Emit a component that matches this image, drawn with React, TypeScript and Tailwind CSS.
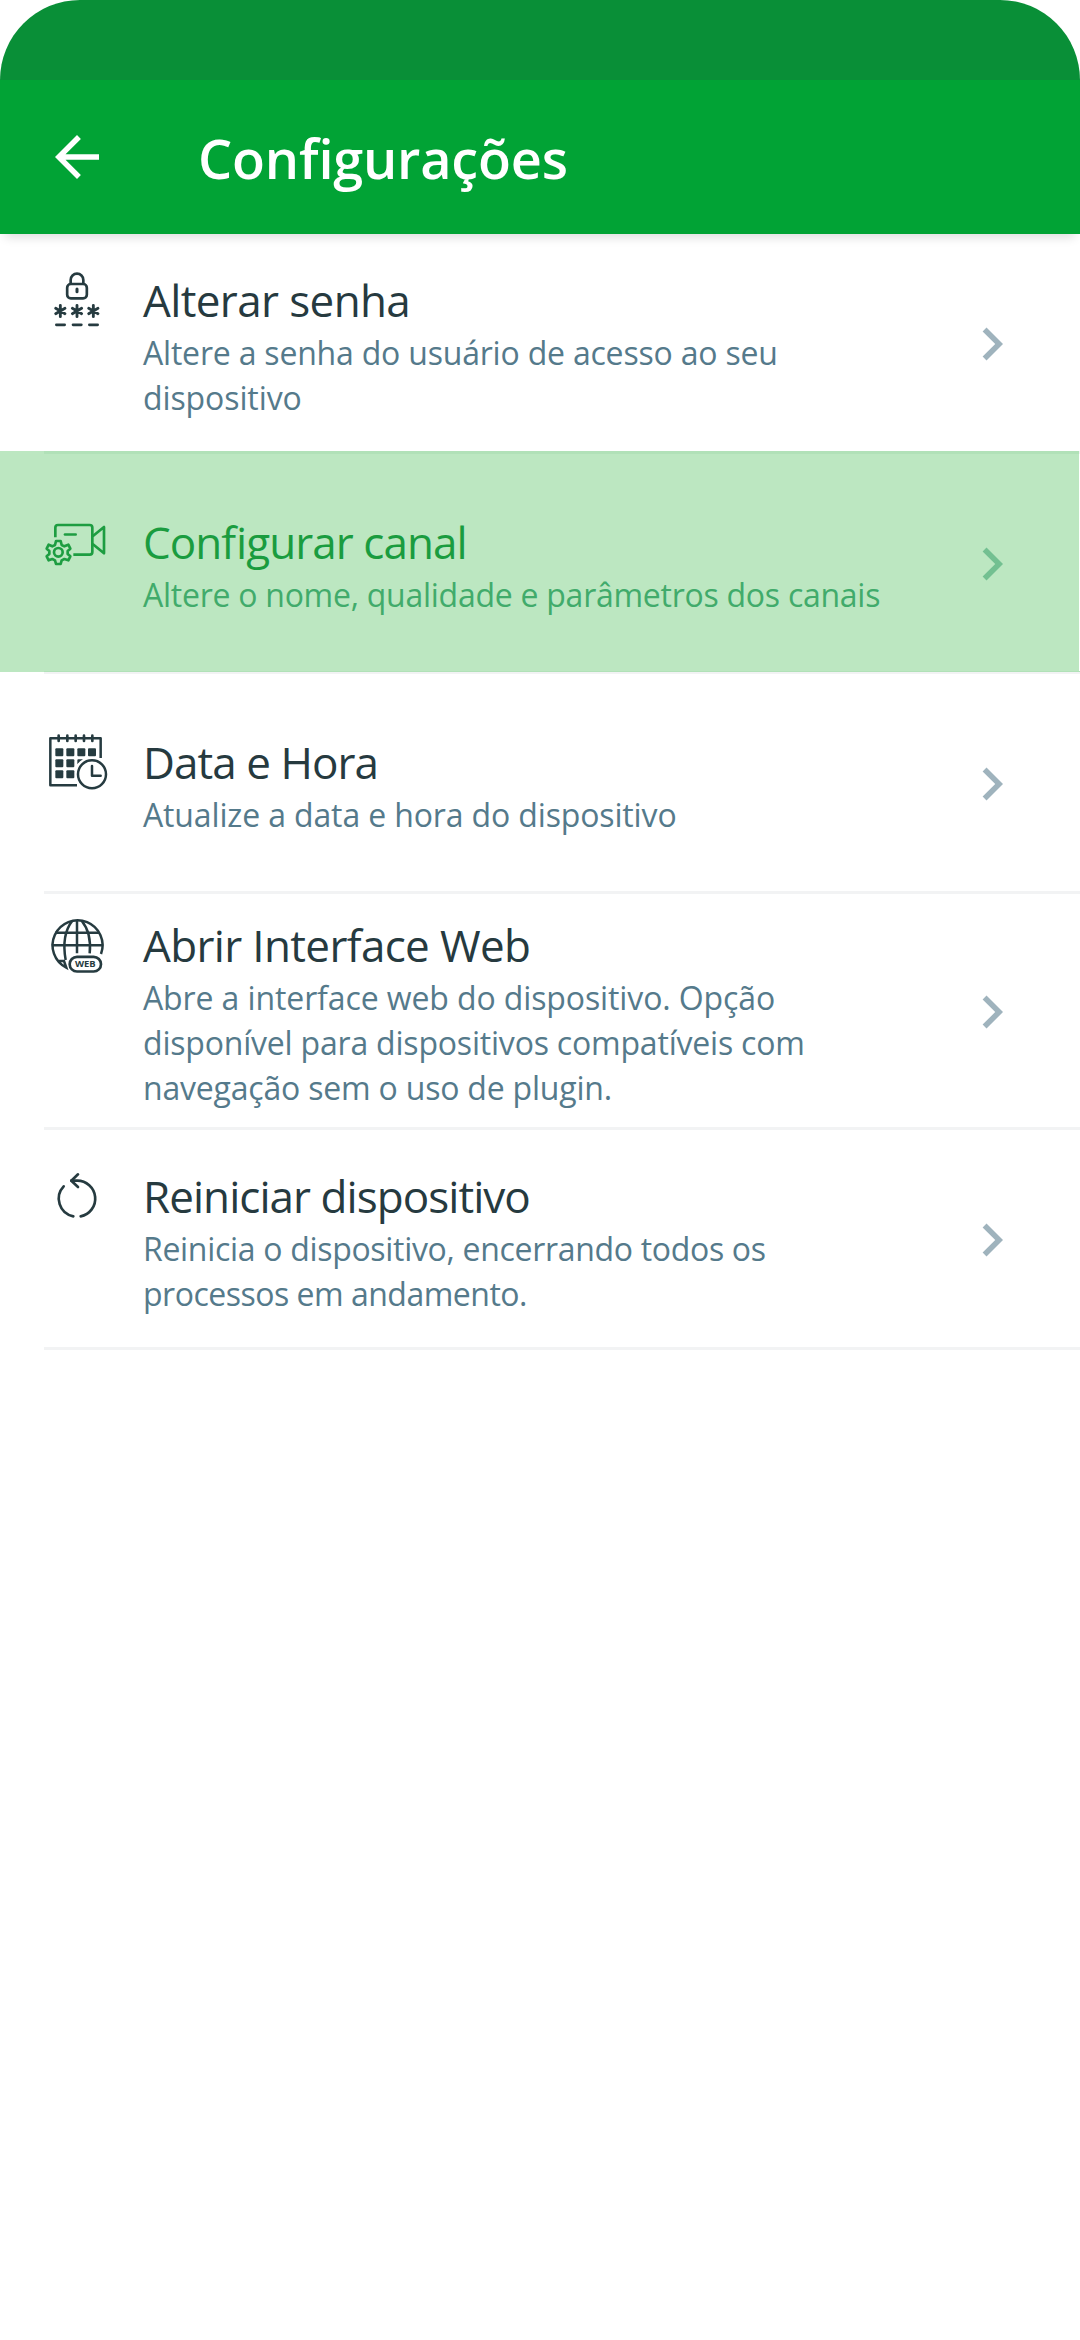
import { type ReactNode } from "react";

type Line = { text: string; tracking: string };

function LockIcon() {
  return (
    <svg className="h-[90px] w-[100px]" viewBox="0 0 300 270" fill="none" stroke="currentColor" strokeWidth="8" strokeLinecap="round">
      <path d="M122 86V75a19 19 0 0 1 38 0V86" />
      <rect x="111.500" y="87" width="59" height="43" rx="11" />
      <path d="M141 102v8" strokeWidth="9" />
      {[91, 141, 190].map((x) => (
        <g key={x}>
          <path d={`M${x} 151v34M${x - 14} 160l28 16M${x + 14} 160l-28 16`} strokeWidth="8.500" />
          <path d={`M${x - 12} 209.500h25`} />
        </g>
      ))}
    </svg>
  );
}

function CameraIcon() {
  return (
    <svg className="h-[80px] w-[100px]" viewBox="0 0 300 240" fill="none" stroke="currentColor" strokeWidth="8" strokeLinejoin="round">
      <path d="M76 97V68q0-8 8-8h95q8 0 8 8v73q0 8-8 8h-49" />
      <path d="M188 94l34-28v79l-34-28" />
      <path d="M105 88.500h32" strokeLinecap="round" />
      <circle cx="85" cy="142" r="13" />
      <path d="M78 108h14l3 12 8 4 12-5 6 12-8 7v9l8 7-6 12-12-4-8 4-3 11H78l-3-11-8-4-11 4-6-12 8-7v-9l-8-7 6-12 11 5 8-4z" />
    </svg>
  );
}

function CalendarIcon() {
  return (
    <svg className="h-[80px] w-[100px]" viewBox="0 0 300 240" fill="none" stroke="currentColor" strokeWidth="7.500">
      <path d="M212 114V55H61v141h80" strokeLinejoin="round" />
      {[86, 112, 137, 162, 187].map((x) => (
        <path key={x} d={`M${x} 47v16`} strokeLinecap="round" strokeWidth="8" />
      ))}
      <g fill="currentColor" stroke="none">
        {[76, 109, 142, 174].map((x) => (
          <rect key={x} x={x} y="85" width="24" height="24" rx="3" />
        ))}
        <rect x="76" y="118" width="24" height="24" rx="3" />
        <rect x="109" y="118" width="24" height="24" rx="3" />
        <rect x="76" y="151" width="24" height="24" rx="3" />
        <rect x="109" y="151" width="24" height="24" rx="3" />
        <path d="M142 133v-12q0-3 3-3h14q-10 5-17 15z" />
      </g>
      <circle cx="186" cy="163" r="42" />
      <path d="M186 138v29h26" strokeLinecap="round" strokeLinejoin="round" />
    </svg>
  );
}

function WebIcon() {
  return (
    <svg className="h-[80px] w-[100px]" viewBox="0 0 300 240" fill="none" stroke="currentColor" strokeWidth="7.500">
      <path d="M213 147A75 75 0 1 0 109 188L102 168H82" />
      <path d="M141 45v100M75 83h132M65 121h152" />
      <path d="M127 47C101 80 99 120 107 165" />
      <path d="M155 47c22 27 28 60 24 98" />
      <rect x="119" y="155.500" width="94" height="44" rx="22" strokeWidth="8" />
      <text x="135" y="186" textLength="62" lengthAdjust="spacingAndGlyphs" fill="currentColor" stroke="none" className="font-['Open_Sans',sans-serif] text-[25px] font-bold">
        WEB
      </text>
    </svg>
  );
}

function RestartIcon() {
  return (
    <svg className="h-[80px] w-[100px]" viewBox="0 0 300 240" fill="none" stroke="currentColor" strokeWidth="8" strokeLinecap="round" strokeLinejoin="round">
      <path d="M101 79A54 54 0 0 0 130 169" />
      <path d="M152 169A54 54 0 0 0 141 62h-17" />
      <path d="M144 43l-20 19 20 19" />
    </svg>
  );
}

type RowProps = {
  icon: ReactNode;
  iconTop: string;
  height: string;
  title: Line;
  lines: Line[];
  selected?: boolean;
};

function Row({ icon, iconTop, height, title, lines, selected }: RowProps) {
  return (
    <li className={`relative flex items-center ${height}`}>
      {selected && <div className="absolute -top-[3px] bottom-[2px] left-0 right-px bg-[#bce7c1]" />}
      {selected && <div className="absolute -top-[3px] left-[44px] right-px h-[3px] bg-[#b1e1b8]" />}
      <div className={`relative self-start pl-[30px] ${iconTop} ${selected ? "text-[#1d9d41]" : "text-[#263b40]"}`}>{icon}</div>
      <div className="relative flex-1 whitespace-nowrap pl-[13px]">
        <h2 className={`pt-[2px] text-[44px] leading-[59px] [font-feature-settings:'liga'_1] ${title.tracking} ${selected ? "text-[#1a9c3f]" : "text-[#263a3f]"}`}>{title.text}</h2>
        {lines.map((l) => (
          <p key={l.text} className={`text-[32px] leading-[45px] ${l.tracking} ${selected ? "text-[#41ab6b]" : "text-[#557a8b]"}`}>
            {l.text}
          </p>
        ))}
      </div>
      <svg className={`relative mr-[55px] size-[66px] ${selected ? "text-[#73c091]" : "text-[#9fb3bd]"}`} viewBox="0 0 24 24" fill="currentColor">
        <path d="M10 6L8.590 7.410 13.170 12l-4.580 4.590L10 18l6-6z" />
      </svg>
      <div className={`absolute bottom-0 left-[44px] right-0 h-[3px] bg-[#f2f3f4] ${selected ? "border-t border-[#b1e1b8]" : ""}`} />
    </li>
  );
}

export default function App() {
  return (
    <main className="h-[2340px] w-[1080px] overflow-hidden bg-white font-['Open_Sans','Noto_Sans',sans-serif]">
      <div className="h-[80px] rounded-t-[80px] bg-[#098f37]" />
      <header className="flex h-[154px] items-center bg-[#01a335] pl-[44px] text-white shadow-[0_8px_10px_-5px_rgba(0,0,0,0.14)]">
        <svg className="size-[66px]" viewBox="0 0 24 24" fill="currentColor">
          <path d="M20 11H7.830l5.590-5.590L12 4l-8 8 8 8 1.410-1.410L7.830 13H20v-2z" />
        </svg>
        <h1 className="ml-[88px] pt-[2px] text-[54px] font-semibold tracking-[-0.2px] [font-feature-settings:'liga'_1]">Configurações</h1>
      </header>
      <ul>
        <Row
          icon={<LockIcon />}
          iconTop="pt-[21px]"
          height="h-[220px]"
          title={{ text: "Alterar senha", tracking: "tracking-[-0.62px]" }}
          lines={[
            { text: "Altere a senha do usuário de acesso ao seu", tracking: "tracking-[-0.2px]" },
            { text: "dispositivo", tracking: "tracking-[-0.1px]" },
          ]}
        />
        <Row
          selected
          icon={<CameraIcon />}
          iconTop="pt-[51px]"
          height="h-[220px]"
          title={{ text: "Configurar canal", tracking: "tracking-[-0.95px]" }}
          lines={[{ text: "Altere o nome, qualidade e parâmetros dos canais", tracking: "tracking-[-0.26px]" }]}
        />
        <Row
          icon={<CalendarIcon />}
          iconTop="pt-[46px]"
          height="h-[220px]"
          title={{ text: "Data e Hora", tracking: "tracking-[-0.94px]" }}
          lines={[{ text: "Atualize a data e hora do dispositivo", tracking: "tracking-[-0.14px]" }]}
        />
        <Row
          icon={<WebIcon />}
          iconTop="pt-[11px]"
          height="h-[236px]"
          title={{ text: "Abrir Interface Web", tracking: "tracking-[-0.65px]" }}
          lines={[
            { text: "Abre a interface web do dispositivo. Opção", tracking: "tracking-[-0.11px]" },
            { text: "disponível para dispositivos compatíveis com", tracking: "tracking-[-0.2px]" },
            { text: "navegação sem o uso de plugin.", tracking: "tracking-[-0.2px]" },
          ]}
        />
        <Row
          icon={<RestartIcon />}
          iconTop="pt-[30px]"
          height="h-[220px]"
          title={{ text: "Reiniciar dispositivo", tracking: "tracking-[-0.95px]" }}
          lines={[
            { text: "Reinicia o dispositivo, encerrando todos os", tracking: "tracking-[-0.31px]" },
            { text: "processos em andamento.", tracking: "tracking-[-0.5px]" },
          ]}
        />
      </ul>
    </main>
  );
}
